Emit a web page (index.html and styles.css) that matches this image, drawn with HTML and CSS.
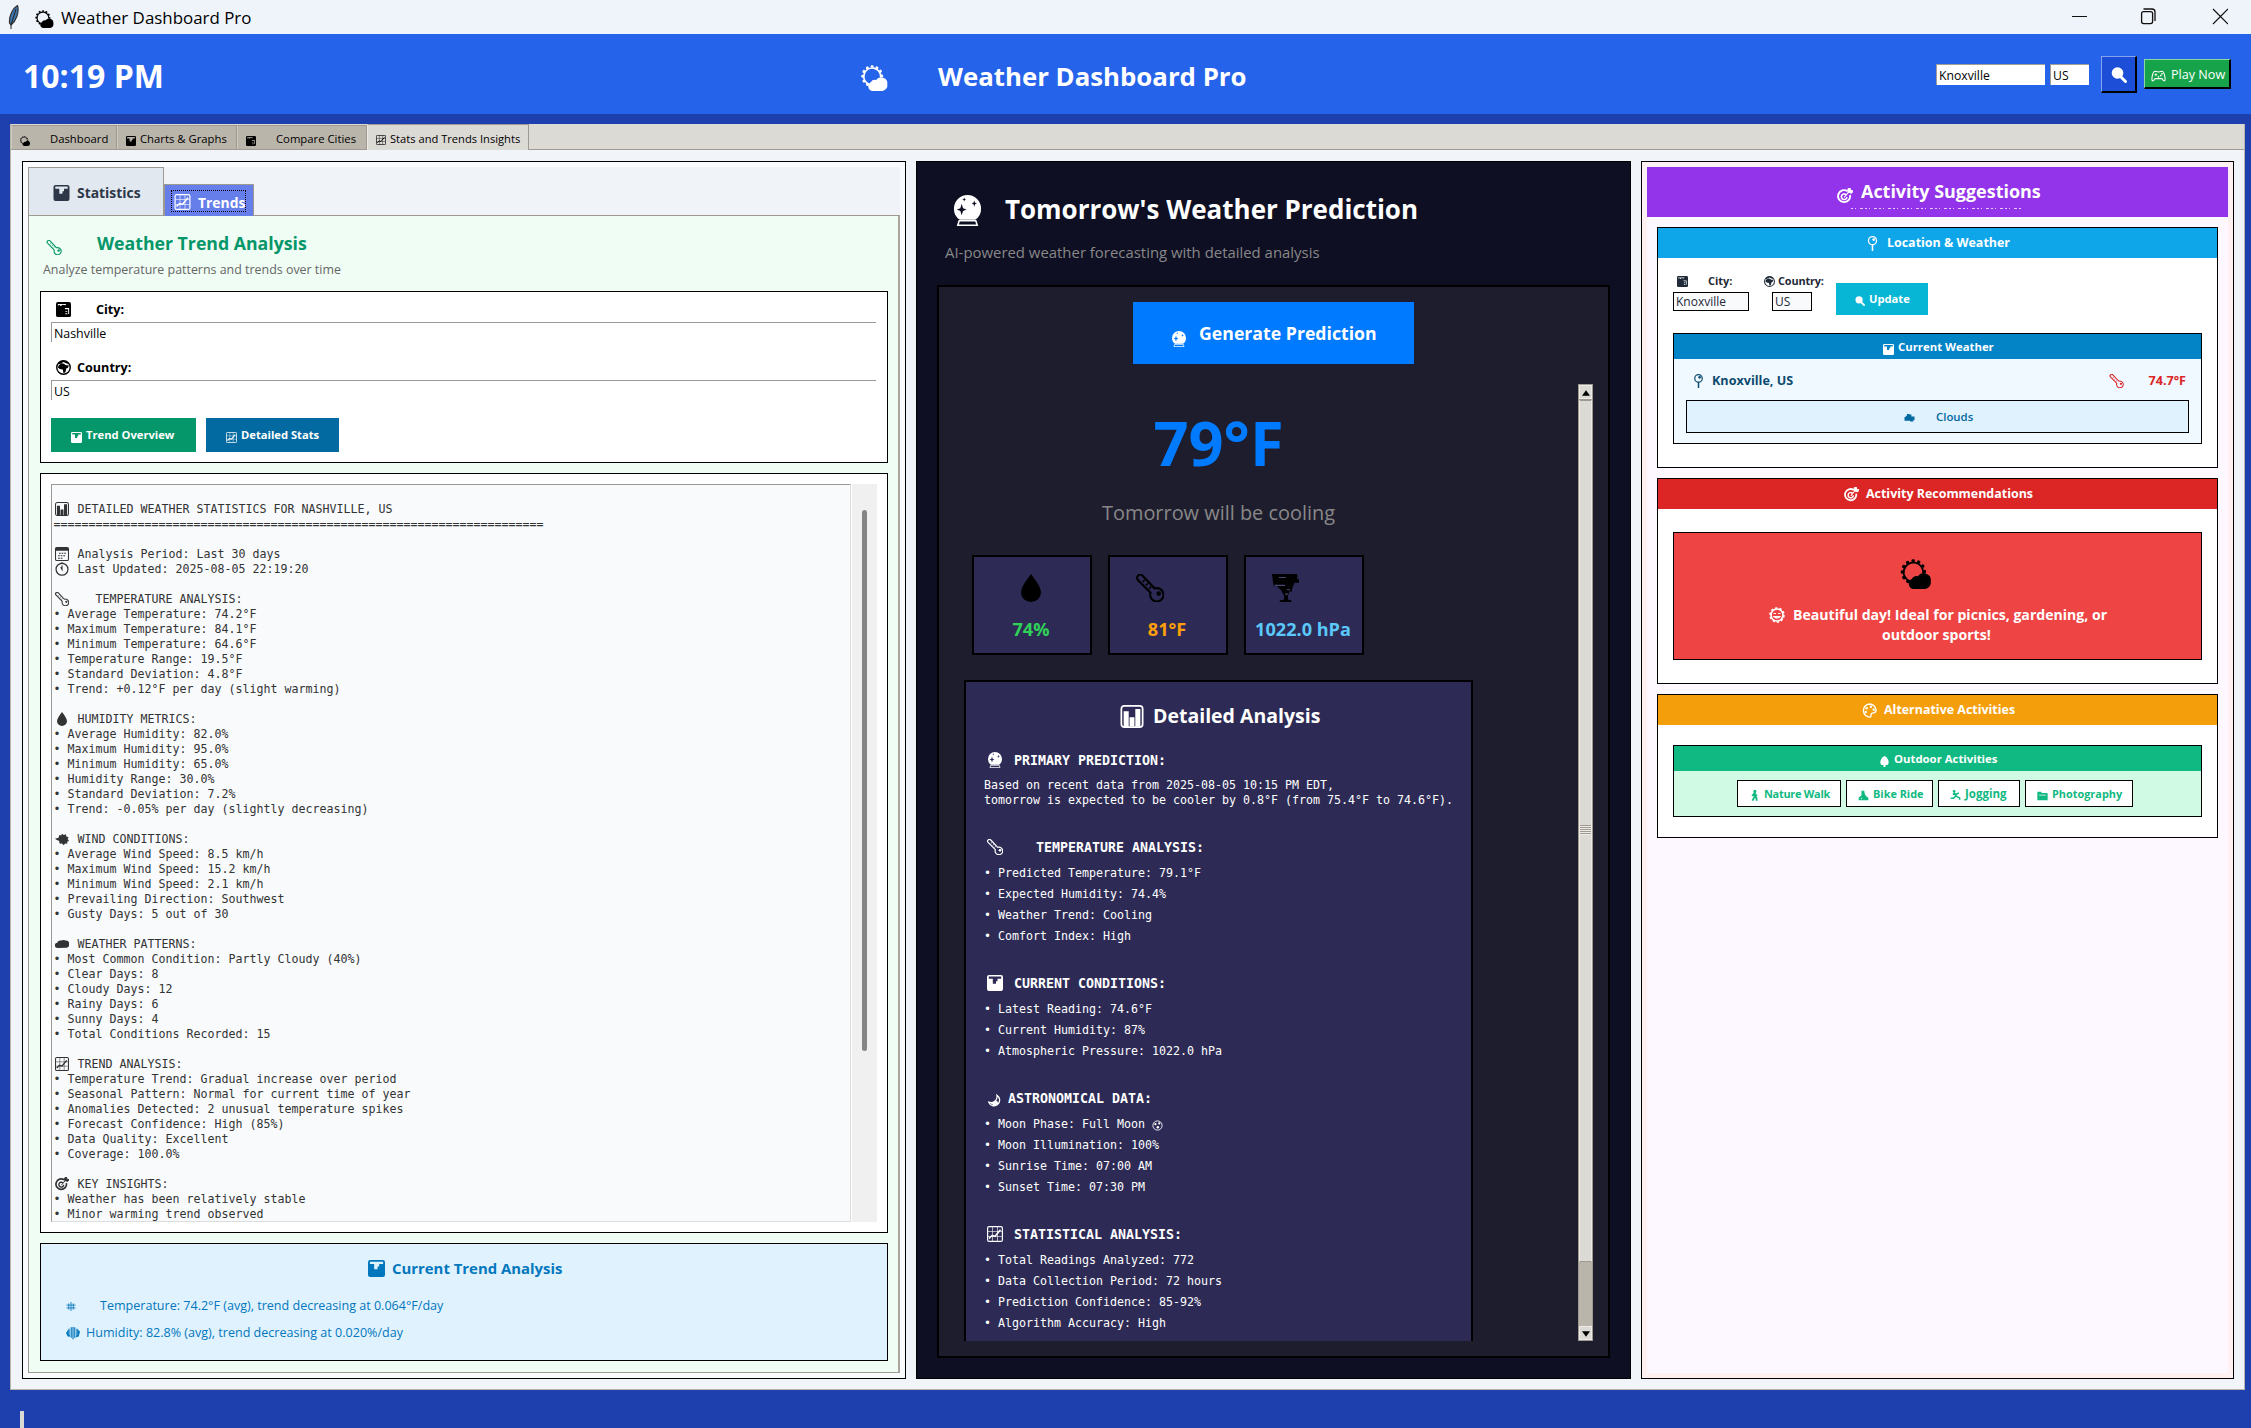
FILE: index.html
```html
<!DOCTYPE html>
<html lang="en">
<head>
<meta charset="utf-8">
<title>Weather Dashboard Pro</title>
<link rel="stylesheet" href="styles.css">
</head>
<body>
<svg class="defs" aria-hidden="true">
  <symbol id="suncloud" viewBox="0 0 16 16"><path d="M5 12A5.200 5.200 0 1 1 11.800 7.500" fill="none" stroke="currentColor" stroke-width="1"/><path d="M3.800 12.200A6 6 0 1 1 12.600 7" fill="none" stroke="currentColor" stroke-width="1.500" stroke-linecap="round" stroke-dasharray=".4 2.700"/><path d="M6.500 16a2.900 2.900 0 0 1-.8-5.400 3 3 0 0 1 3.300-1.400A3.800 3.800 0 0 1 15.900 11.800 3.700 3.700 0 0 1 13 16z" fill="currentColor"/></symbol>
  <symbol id="bars" viewBox="0 0 16 16"><path fill-rule="evenodd" fill="currentColor" d="M2 0h12a2 2 0 0 1 2 2v12a2 2 0 0 1-2 2H2a2 2 0 0 1-2-2V2a2 2 0 0 1 2-2zM1.800 1.600V3.800H5.800V8.800H9V6.200H10.500V3.800H14.200V1.600z"/></symbol>
  <symbol id="barbox" viewBox="0 0 16 16"><rect x=".6" y=".6" width="14.800" height="14.800" rx="2" fill="none" stroke="currentColor" stroke-width="1.200"/><path d="M2.200 4.300h3.500v11H2.200zM6.300 8.500h3.400v6.500H6.300zM10.300 2.700h3.500v12.500h-3.500z" fill="currentColor"/></symbol>
  <symbol id="city" viewBox="0 0 16 16"><path fill-rule="evenodd" fill="currentColor" d="M2 0h12a2 2 0 0 1 2 2v12a2 2 0 0 1-2 2H2a2 2 0 0 1-2-2V2a2 2 0 0 1 2-2zM2 2v2l2-1 1 1.500 2-1.500 3 .5 1-1.500zM9.500 6.500v1.200h3.500v5h1V6.500zM10 9.500h2v1h-2zM10 12h2v1h-2z"/></symbol>
  <symbol id="trend" viewBox="0 0 16 16"><rect x=".6" y=".6" width="14.800" height="14.800" rx="1.500" fill="none" stroke="currentColor" stroke-width="1.200"/><path d="M5.500 1v14M10.500 1v14M1 5.500h14M1 10.500h14" stroke="currentColor" stroke-width=".6"/><path d="M2 12.500 5 9.500l3 .8 5.500-6.500" fill="none" stroke="currentColor" stroke-width="1.500"/></symbol>
  <symbol id="thermo" viewBox="0 0 16 16"><path d="M1.100 3.400A1.800 1.800 0 0 1 3.800 1L10.700 8.300A3.800 3.800 0 1 1 8.300 10.700z" fill="none" stroke="currentColor" stroke-width="1.200" stroke-linejoin="round"/><path d="M3.800 4.500l1.300-1.200M5.600 6.500l1.300-1.200M7.400 8.500l1.300-1.200" stroke="currentColor" stroke-width=".8"/><circle cx="13" cy="11.200" r="1.300" fill="currentColor"/></symbol>
  <symbol id="globe" viewBox="0 0 16 16"><circle cx="8" cy="8" r="7.200" fill="none" stroke="currentColor" stroke-width="1.500"/><path d="M3 5.500 6 3.500l2.500.5 2 1.500 3 0L13 8l-2 1-1 4-2 1-.8-4L4 9.500 2 8z" fill="currentColor"/><path d="M2 3.500C5 0 11 0 14 3.500L12 4 8 2 4 4.500z" fill="currentColor"/></symbol>
  <symbol id="calendar" viewBox="0 0 16 16"><rect x=".6" y=".6" width="14.800" height="14.800" rx="1.500" fill="none" stroke="currentColor" stroke-width="1.200"/><path d="M.6 1h14.800v3.300H.6z" fill="currentColor"/><path d="M4.500 7.200h8M3.500 10h9M3.500 12.800h6" stroke="currentColor" stroke-width="1.300" stroke-dasharray="2 1"/></symbol>
  <symbol id="clock" viewBox="0 0 16 16"><circle cx="8" cy="8.300" r="6.800" fill="none" stroke="currentColor" stroke-width="1.400"/><path d="M8 4v4.500L6.500 6M6.500 0h3" stroke="currentColor" stroke-width="1.300" fill="none"/></symbol>
  <symbol id="drop" viewBox="0 0 16 16"><path d="M8 0C10.500 3.500 13.700 7.500 13.700 10.500a5.700 5.500 0 0 1-11.400 0C2.300 7.500 5.500 3.500 8 0z" fill="currentColor"/></symbol>
  <symbol id="wind" viewBox="0 0 16 16"><path d="M0 7.600 4 6.500 5 3.500 7 4 8 2l2 1.500 2.500-1L13 5l2.500 1-1 2 1.500 2-2 1 0 2.500-2.500-.5L10 15l-2-2-2.500.5L4.500 10 2 9z" fill="currentColor"/></symbol>
  <symbol id="cloud" viewBox="0 0 16 16"><path d="M3 12.500A3 3 0 0 1 2.500 6.500 4 4 0 0 1 7 4 6 6 0 0 1 12.500 4a4.200 4.200 0 0 1 1 8.200z" fill="currentColor"/></symbol>
  <symbol id="cloud2" viewBox="0 0 16 16"><path d="M0 14V8h2V6h2V3h4v1h3v3h5v6h-2v2H9v-1z" fill="currentColor"/></symbol>
  <symbol id="target" viewBox="0 0 16 16"><path d="M10.500 3.200A6 6 0 1 0 13 7" fill="none" stroke="currentColor" stroke-width="1.900"/><path d="M9 6.600A2.800 2.800 0 1 0 10 9" fill="none" stroke="currentColor" stroke-width="1.600"/><path d="M7.200 9.400l5-6M11 4V1l2-1 .5 2.300L16 3l-1.500 2z" fill="currentColor" stroke="currentColor" stroke-width="1.100"/></symbol>
  <symbol id="snow" viewBox="0 0 16 16"><path d="M8 0v16M0 5.500h16M0 10.500h16M4 2.500v11M12 2.500v11" stroke="currentColor" stroke-width="1.500"/></symbol>
  <symbol id="hum" viewBox="0 0 16 16"><path d="M3.500 3v9M12.500 3v9M8 1v14M6 1.500v12M10 1.500v12" stroke="currentColor" stroke-width="1.300"/><path d="M0 8 3 3.500v6L5 12H2zM16 6.500 13 3v7l-2.500 3 4-1z" fill="currentColor"/></symbol>
  <symbol id="ball" viewBox="0 0 16 16"><path fill-rule="evenodd" fill="currentColor" d="M4 12.800A7 6.800 0 0 1 1 7 7 7 0 0 1 15 7a7 6.800 0 0 1-3 5.800zM5 4.500 4.300 6.800 2.500 7.500l1.800.7L5 10.500l.7-2.300 1.800-.7-1.800-.7zM11.500 2.800l-.4 1.200-1 .4 1 .4.4 1.300.4-1.300 1-.4-1-.4zM6.300 1.300 6 2l-.7.300.7.300.3.700.3-.7.700-.3-.7-.3z"/><path d="M3.700 13.300h8.600l.7 2.300H3z" fill="none" stroke="currentColor" stroke-width=".8"/></symbol>
  <symbol id="tornado" viewBox="0 0 16 16"><path d="M.5 0h14.500v3H16V5h-2.500L12 8.500V10h-1.500L9.700 12.500v2l2 .7V16H5v-.8l2.500-.7v-2L6 9.500 3.500 7H1.500z" fill="currentColor"/><path d="M4.500 2h4M2 6.500h6M9 9h2M8 11.500h1.800" stroke="#4b4875" stroke-width=".6"/></symbol>
  <symbol id="moon" viewBox="0 0 16 16"><path d="M11 1.500A7 7 0 1 1 .8 10 7.500 7.500 0 0 0 11 1.500z" fill="none" stroke="currentColor" stroke-width="1.600"/><path d="M3 11.500l8-3.500 2 4-5 2.500z" fill="currentColor"/></symbol>
  <symbol id="fullmoon" viewBox="0 0 16 16"><circle cx="8" cy="8" r="6.700" fill="none" stroke="currentColor" stroke-width="1.300"/><circle cx="5" cy="6" r="1.600" fill="currentColor"/><circle cx="10.500" cy="5" r="1.600" fill="currentColor"/><circle cx="8.500" cy="10.500" r="1.800" fill="currentColor"/></symbol>
  <symbol id="pin" viewBox="0 0 16 16"><circle cx="8" cy="5" r="4.300" fill="none" stroke="currentColor" stroke-width="1.400"/><path d="M8 9v7" stroke="currentColor" stroke-width="1.700"/><circle cx="9.300" cy="3.800" r="1.500" fill="currentColor"/></symbol>
  <symbol id="search" viewBox="0 0 16 16"><circle cx="6.500" cy="6" r="5.800" fill="currentColor"/><path d="M9.500 9.500 14.500 14.500" stroke="currentColor" stroke-width="3" stroke-linecap="round"/></symbol>
  <symbol id="pad" viewBox="0 0 16 16"><path d="M4 2.500 8 3.500l4-1c2 0 3.500 5 3.500 9.500 0 2.500-2 2-3.500-1H4c-1.500 3-3.500 3.500-3.500 1C.5 7.500 2 2.500 4 2.500z" fill="none" stroke="currentColor" stroke-width="1.200"/><path d="M3.500 6.500h3M5 5v3" stroke="currentColor"/><circle cx="10.500" cy="7.500" r="1" fill="currentColor"/><circle cx="12" cy="5.500" r="1" fill="currentColor"/><circle cx="8" cy="9" r=".9" fill="currentColor"/></symbol>
  <symbol id="palette" viewBox="0 0 16 16"><path d="M8 1a7 7 0 1 0 1 14c1.500-.5-.5-3 1.500-4s4.500.5 4.500-3.500A7 7 0 0 0 8 1z" fill="none" stroke="currentColor" stroke-width="1.500"/><circle cx="5" cy="5.500" r="1.300" fill="currentColor"/><circle cx="4" cy="9.500" r="1.300" fill="currentColor"/><circle cx="9.500" cy="4" r="1.300" fill="currentColor"/><circle cx="12.500" cy="7" r="1.300" fill="currentColor"/></symbol>
  <symbol id="sunface" viewBox="0 0 16 16"><circle cx="8" cy="8" r="6" fill="none" stroke="currentColor" stroke-width="1.600"/><circle cx="8" cy="8" r="7" fill="none" stroke="currentColor" stroke-width="1.600" stroke-dasharray="2.400 2"/><path d="M4.500 6.500h2.500M9 6.500h2.500M5 9.500q3 3 6 0z" stroke="currentColor" stroke-width="1.200" fill="none"/></symbol>
  <symbol id="tree" viewBox="0 0 16 16"><path d="M8 0q4 1.500 5.500 6t-1 7H9.500v3h-3v-3H3.500q-2.500-2.500-1-7T8 0z" fill="currentColor"/></symbol>
  <symbol id="walk" viewBox="0 0 16 16"><circle cx="8.500" cy="2" r="2.200" fill="currentColor"/><path d="M8 5v5L5 15.500M8 9l3 3v3.500M4.500 8.500 8 5l3.500 4" stroke="currentColor" stroke-width="2.700" fill="none"/></symbol>
  <symbol id="bike" viewBox="0 0 16 16"><path d="M5 1h4l1 5 3 4 2 1v4H1v-4l4-3z" fill="currentColor"/><circle cx="5" cy="12.500" r="1" fill="#fff"/></symbol>
  <symbol id="run" viewBox="0 0 16 16"><circle cx="6" cy="2" r="2" fill="currentColor"/><path d="M6 4l3 5 5 2.500V14M8 9l-3 3H1M4 6l5 0 4-1.500" stroke="currentColor" stroke-width="2.300" fill="none"/></symbol>
  <symbol id="camera" viewBox="0 0 16 16"><path d="M1 2.500h5l1 2h7.500a1 1 0 0 1 1 1V15h-15V3.500z" fill="currentColor"/><path d="M3 7.500h10" stroke="#fff"/></symbol>
</svg>

<header class="titlebar">
  <svg class="feather" viewBox="0 0 12 24"><path d="M9.500.5C5 3 1 10 1.500 18l1.500 2C8 16 11.500 8 9.500.5z" fill="#3f75ad" stroke="#333" stroke-width="1.200"/><path d="M8 4 3 20v4" fill="none" stroke="#222" stroke-width="1"/></svg>
  <svg class="i i19"><use href="#suncloud"/></svg>
  <span class="wintitle">Weather Dashboard Pro</span>
  <svg class="winctl" viewBox="0 0 156 20"><path d="M0 10.500h15M141 3l15 15M156 3l-15 15" stroke="#111" stroke-width="1.200" fill="none"/><rect x="69.600" y="5.600" width="11" height="12" rx="2" fill="none" stroke="#111" stroke-width="1.300"/><path d="M71.500 3h8.500a3 3 0 0 1 3 3v9" fill="none" stroke="#111" stroke-width="1.300"/></svg>
</header>

<section class="appbar">
  <div class="clock">10:19 PM</div>
  <div class="apptitle"><svg class="i"><use href="#suncloud"/></svg><span>Weather Dashboard Pro</span></div>
  <div class="appform">
    <div class="entry e-city">Knoxville</div>
    <div class="entry e-ctry">US</div>
    <div class="btn-search"><svg class="i"><use href="#search"/></svg></div>
    <div class="btn-play"><svg class="i"><use href="#pad"/></svg><span>Play Now</span></div>
  </div>
</section>

<main class="book">
  <nav class="tabs">
    <div class="tab t1"><svg class="i"><use href="#suncloud"/></svg><span>Dashboard</span></div>
    <div class="tab t2"><svg class="i"><use href="#bars"/></svg><span>Charts &amp; Graphs</span></div>
    <div class="tab t3"><svg class="i"><use href="#city"/></svg><span>Compare Cities</span></div>
    <div class="tab t4 active"><svg class="i"><use href="#trend"/></svg><span>Stats and Trends Insights</span></div>
  </nav>
  <div class="columns">

    <section class="left">
      <div class="subtabs">
        <div class="st stats"><svg class="i"><use href="#bars"/></svg><span>Statistics</span></div>
        <div class="st trends"><div class="focus"><svg class="i"><use href="#trend"/></svg><span>Trends</span></div></div>
      </div>
      <div class="green">
        <h2 class="lefttitle"><svg class="i"><use href="#thermo"/></svg><span>Weather Trend Analysis</span></h2>
        <p class="leftsub">Analyze temperature patterns and trends over time</p>
        <div class="form">
          <div class="flabel wide"><svg class="i"><use href="#city"/></svg><span>City:</span></div>
          <div class="fentry">Nashville</div>
          <div class="flabel second"><svg class="i"><use href="#globe"/></svg><span>Country:</span></div>
          <div class="fentry">US</div>
          <div class="fbtns">
            <div class="fbtn b1"><svg class="i"><use href="#bars"/></svg><span>Trend Overview</span></div>
            <div class="fbtn b2"><svg class="i"><use href="#trend"/></svg><span>Detailed Stats</span></div>
          </div>
        </div>
        <div class="results">
          <div class="report">
            <div class="ln"></div>
            <div class="ln h"><svg class="i"><use href="#barbox"/></svg>DETAILED WEATHER STATISTICS FOR NASHVILLE, US</div>
            <div class="ln">======================================================================</div>
            <div class="ln"></div>
            <div class="ln h"><svg class="i"><use href="#calendar"/></svg>Analysis Period: Last 30 days</div>
            <div class="ln h"><svg class="i"><use href="#clock"/></svg>Last Updated: 2025-08-05 22:19:20</div>
            <div class="ln"></div>
            <div class="ln h far"><svg class="i"><use href="#thermo"/></svg>TEMPERATURE ANALYSIS:</div>
            <div class="ln">• Average Temperature: 74.2°F</div>
            <div class="ln">• Maximum Temperature: 84.1°F</div>
            <div class="ln">• Minimum Temperature: 64.6°F</div>
            <div class="ln">• Temperature Range: 19.5°F</div>
            <div class="ln">• Standard Deviation: 4.8°F</div>
            <div class="ln">• Trend: +0.12°F per day (slight warming)</div>
            <div class="ln"></div>
            <div class="ln h"><svg class="i"><use href="#drop"/></svg>HUMIDITY METRICS:</div>
            <div class="ln">• Average Humidity: 82.0%</div>
            <div class="ln">• Maximum Humidity: 95.0%</div>
            <div class="ln">• Minimum Humidity: 65.0%</div>
            <div class="ln">• Humidity Range: 30.0%</div>
            <div class="ln">• Standard Deviation: 7.2%</div>
            <div class="ln">• Trend: -0.05% per day (slightly decreasing)</div>
            <div class="ln"></div>
            <div class="ln h"><svg class="i"><use href="#wind"/></svg>WIND CONDITIONS:</div>
            <div class="ln">• Average Wind Speed: 8.5 km/h</div>
            <div class="ln">• Maximum Wind Speed: 15.2 km/h</div>
            <div class="ln">• Minimum Wind Speed: 2.1 km/h</div>
            <div class="ln">• Prevailing Direction: Southwest</div>
            <div class="ln">• Gusty Days: 5 out of 30</div>
            <div class="ln"></div>
            <div class="ln h"><svg class="i"><use href="#cloud"/></svg>WEATHER PATTERNS:</div>
            <div class="ln">• Most Common Condition: Partly Cloudy (40%)</div>
            <div class="ln">• Clear Days: 8</div>
            <div class="ln">• Cloudy Days: 12</div>
            <div class="ln">• Rainy Days: 6</div>
            <div class="ln">• Sunny Days: 4</div>
            <div class="ln">• Total Conditions Recorded: 15</div>
            <div class="ln"></div>
            <div class="ln h"><svg class="i"><use href="#trend"/></svg>TREND ANALYSIS:</div>
            <div class="ln">• Temperature Trend: Gradual increase over period</div>
            <div class="ln">• Seasonal Pattern: Normal for current time of year</div>
            <div class="ln">• Anomalies Detected: 2 unusual temperature spikes</div>
            <div class="ln">• Forecast Confidence: High (85%)</div>
            <div class="ln">• Data Quality: Excellent</div>
            <div class="ln">• Coverage: 100.0%</div>
            <div class="ln"></div>
            <div class="ln h"><svg class="i"><use href="#target"/></svg>KEY INSIGHTS:</div>
            <div class="ln">• Weather has been relatively stable</div>
            <div class="ln">• Minor warming trend observed</div>
          </div>
          <div class="lscroll"><div class="lthumb"></div></div>
        </div>
        <div class="current">
          <h3><svg class="i"><use href="#bars"/></svg><span>Current Trend Analysis</span></h3>
          <p class="c1"><svg class="i"><use href="#snow"/></svg><span>Temperature: 74.2°F (avg), trend decreasing at 0.064°F/day</span></p>
          <p class="c2"><svg class="i"><use href="#hum"/></svg><span>Humidity: 82.8% (avg), trend decreasing at 0.020%/day</span></p>
        </div>
      </div>
    </section>

    <section class="mid">
      <h1><svg class="i"><use href="#ball"/></svg><span>Tomorrow's Weather Prediction</span></h1>
      <p class="midsub">AI-powered weather forecasting with detailed analysis</p>
      <div class="predict">
        <div class="gen"><svg class="i"><use href="#ball"/></svg><span>Generate Prediction</span></div>
        <div class="canvas">
          <div class="content">
            <div class="temp">79°F</div>
            <div class="outlook">Tomorrow will be cooling</div>
            <div class="metrics">
              <div class="metric m1"><svg class="i"><use href="#drop"/></svg><span>74%</span></div>
              <div class="metric m2"><svg class="i"><use href="#thermo"/></svg><span>81°F</span></div>
              <div class="metric m3"><svg class="i"><use href="#tornado"/></svg><span>1022.0 hPa</span></div>
            </div>
            <div class="detail">
              <h3><svg class="i"><use href="#barbox"/></svg><span>Detailed Analysis</span></h3>
              <h4><svg class="i"><use href="#ball"/></svg>PRIMARY PREDICTION:</h4>
              <p class="para">Based on recent data from 2025-08-05 10:15 PM EDT,<br>tomorrow is expected to be cooler by 0.8°F (from 75.4°F to 74.6°F).</p>
              <h4 class="far"><svg class="i"><use href="#thermo"/></svg>TEMPERATURE ANALYSIS:</h4>
              <p>• Predicted Temperature: 79.1°F</p>
              <p>• Expected Humidity: 74.4%</p>
              <p>• Weather Trend: Cooling</p>
              <p>• Comfort Index: High</p>
              <h4><svg class="i"><use href="#bars"/></svg>CURRENT CONDITIONS:</h4>
              <p>• Latest Reading: 74.6°F</p>
              <p>• Current Humidity: 87%</p>
              <p>• Atmospheric Pressure: 1022.0 hPa</p>
              <h4 class="near"><svg class="i"><use href="#moon"/></svg>ASTRONOMICAL DATA:</h4>
              <p>• Moon Phase: Full Moon <svg class="i fm"><use href="#fullmoon"/></svg></p>
              <p>• Moon Illumination: 100%</p>
              <p>• Sunrise Time: 07:00 AM</p>
              <p>• Sunset Time: 07:30 PM</p>
              <h4><svg class="i"><use href="#trend"/></svg>STATISTICAL ANALYSIS:</h4>
              <p>• Total Readings Analyzed: 772</p>
              <p>• Data Collection Period: 72 hours</p>
              <p>• Prediction Confidence: 85-92%</p>
              <p>• Algorithm Accuracy: High</p>
            </div>
          </div>
          <div class="mscroll">
            <div class="arrow"><svg viewBox="0 0 9 6"><path d="M4.500 0 9 6H0z"/></svg></div>
            <div class="mthumb"><div class="grip"></div></div>
            <div class="arrow"><svg viewBox="0 0 9 6"><path d="M4.500 6 9 0H0z"/></svg></div>
          </div>
        </div>
      </div>
    </section>

    <section class="right">
      <div class="rinner">
        <div class="rtitle"><svg class="i"><use href="#target"/></svg><span>Activity Suggestions</span><div class="clip"></div></div>
        <div class="card k1">
          <div class="chead"><svg class="i"><use href="#pin"/></svg><span>Location &amp; Weather</span></div>
          <div class="loc">
            <div class="field f1"><label><svg class="i"><use href="#city"/></svg><span>City:</span></label><div class="box">Knoxville</div></div>
            <div class="field f2"><label><svg class="i"><use href="#globe"/></svg><span>Country:</span></label><div class="box">US</div></div>
            <div class="update"><svg class="i"><use href="#search"/></svg><span>Update</span></div>
          </div>
          <div class="now">
            <div class="shead"><svg class="i"><use href="#bars"/></svg><span>Current Weather</span></div>
            <div class="nowrow"><svg class="i pin"><use href="#pin"/></svg><span class="place">Knoxville, US</span><svg class="i th"><use href="#thermo"/></svg><span class="deg">74.7°F</span></div>
            <div class="clouds"><svg class="i"><use href="#cloud2"/></svg><span>Clouds</span></div>
          </div>
        </div>
        <div class="card k2">
          <div class="chead"><svg class="i"><use href="#target"/></svg><span>Activity Recommendations</span></div>
          <div class="rec">
            <svg class="i big"><use href="#suncloud"/></svg>
            <div class="r1"><svg class="i"><use href="#sunface"/></svg><span>Beautiful day! Ideal for picnics, gardening, or</span></div>
            <div class="r2">outdoor sports!</div>
          </div>
        </div>
        <div class="card k3">
          <div class="chead"><svg class="i"><use href="#palette"/></svg><span>Alternative Activities</span></div>
          <div class="outdoor">
            <div class="shead"><svg class="i"><use href="#tree"/></svg><span>Outdoor Activities</span></div>
            <div class="acts">
              <div class="act a1"><svg class="i"><use href="#walk"/></svg><span>Nature Walk</span></div>
              <div class="act a2"><svg class="i"><use href="#bike"/></svg><span>Bike Ride</span></div>
              <div class="act a3"><svg class="i"><use href="#run"/></svg><span>Jogging</span></div>
              <div class="act a4"><svg class="i"><use href="#camera"/></svg><span>Photography</span></div>
            </div>
          </div>
        </div>
      </div>
    </section>
  </div>
</main>
<div class="footmark"></div>
</body>
</html>
```
FILE: styles.css
```css
* { box-sizing: border-box; margin: 0; padding: 0; }
body { width: 2251px; height: 1428px; overflow: hidden; background: #1e40af; font-family: "Open Sans", "Noto Sans", sans-serif; font-size: 11.400px; color: #000; white-space: nowrap; }
.defs { display: none; }
.i { display: block; flex: none; overflow: visible; }
span { display: block; }
h1, h2, h3, h4 { font-weight: 700; }

.titlebar { height: 34px; background: #eff4fb; display: flex; align-items: center; padding-left: 8px; }
.feather { width: 12px; height: 24px; margin-top: -1px; }
.i19 { width: 19px; height: 18px; margin: 3px 7px 0 15px; }
.wintitle { font-size: 16.900px; line-height: 34px; margin-top: 1px; }
.winctl { width: 156px; height: 20px; margin: -2px 23px 0 auto; }

.appbar { height: 80px; background: #2563eb; color: #fff; display: flex; padding-left: 23px; }
.clock { font-size: 32px; font-weight: 700; line-height: 84px; width: 837px; }
.apptitle { display: flex; font-size: 25.800px; font-weight: 700; line-height: 84px; }
.apptitle .i { width: 29px; height: 26px; margin: 31px 49px 0 0; }
.appform { display: flex; margin-left: auto; padding-right: 20px; color: #000; }
.entry { height: 21px; margin-top: 30px; background: #fff; border-top: 1px solid #a39e94; border-left: 1px solid #a39e94; font-size: 12.200px; line-height: 22px; padding-left: 2px; }
.e-city { width: 109px; margin-right: 5px; }
.e-ctry { width: 39px; margin-right: 12px; }
.btn-search { width: 36px; height: 37px; margin: 22px 7px 0 0; background: #1d4ed8; border: 1px solid #86a4ee; border-right: 2px solid #000; border-bottom: 2px solid #000; color: #fff; }
.btn-search .i { width: 16px; height: 16px; margin: 10px 0 0 9px; }
.btn-play { width: 87px; height: 30px; margin-top: 25px; background: #16a34a; border: 1px solid #8ad9a5; border-right: 2px solid #000; border-bottom: 2px solid #000; color: #fff; display: flex; font-size: 12.600px; line-height: 29px; padding-left: 6px; }
.btn-play .i { width: 15px; height: 14px; margin: 9px 5px 0 0; }

.book { margin: 10px 6px 0 10px; height: 1266px; background: #f1f5f9; border: 1px solid #bab5ab; border-top: 0; }
.tabs { height: 26px; background: #dcdad5; border-bottom: 1px solid #9e9a91; display: flex; align-items: flex-end; }
.tab { height: 24px; background: #bab5ab; border: 1px solid #9e9a91; border-left-color: #cfcac0; border-bottom: 0; display: flex; line-height: 25px; font-size: 11.300px; }
.tab .i { width: 10px; height: 10px; margin: 10px 0 0 8px; }
.tab span { margin-left: 4px; }
.t1 { width: 106px; } .t1 span { margin-left: 20px; }
.t2 { width: 120px; }
.t3 { width: 130px; } .t3 span { margin-left: 20px; }
.t4 { width: 162px; }
.tab.active { background: #dcdad5; height: 26px; margin-bottom: -1px; border-left-color: #eeebe7; line-height: 28px; font-size: 11.150px; }
.columns { display: flex; gap: 10px; padding: 11px 10px 0 11px; }

.left { width: 884px; height: 1218px; border: 1px solid #000; background: #f9fbfe; padding: 5px; }
.subtabs { height: 49px; background: #f0f4f8; display: flex; border-bottom: 1px solid #9e9a91; align-items: flex-end; }
.st { font-size: 13.900px; font-weight: 700; display: flex; border: 1px solid #9e9a91; border-bottom: 0; }
.stats { width: 136px; height: 48px; background: #e2e8f0; color: #2d3748; line-height: 50px; }
.stats .i { width: 17px; height: 16px; margin: 17px 7px 0 24px; }
.trends { width: 90px; height: 32px; margin-bottom: -1px; background: #667eea; color: #fff; padding: 5px 0 0 6px; }
.focus { width: 75px; height: 22px; border: 1px dotted #000; display: flex; line-height: 23px; }
.focus .i { width: 17px; height: 16px; margin: 3px 7px 0 2px; }
.green { width: 872px; height: 1157px; background: #f0fdf4; border: 1px solid #9e9a91; border-top: 0; border-right: 2px solid #aaa69d; padding: 0 0 0 11px; }
.lefttitle { display: flex; font-size: 17.700px; line-height: 26px; color: #059669; padding-top: 14px; height: 40px; }
.lefttitle .i { width: 16px; height: 15px; margin: 10px 35px 0 6px; }
.leftsub { font-size: 12.430px; color: #666; line-height: 20px; margin-left: 3px; height: 35px; padding-top: 4px; }
.form { width: 848px; height: 172px; border: 1px solid #000; background: #fff; padding: 10px 11px 0 10px; }
.flabel { display: flex; height: 20px; font-size: 12.600px; font-weight: 700; line-height: 16px; padding: 0 0 0 5px; }
.flabel .i { width: 15px; height: 15px; margin-right: 6px; }
.flabel.wide .i { margin-right: 25px; }
.flabel.second { margin-top: 18px; }
.fentry { height: 20px; border-top: 1px solid #999; border-left: 1px solid #999; font-size: 12.400px; line-height: 21px; padding-left: 2px; }
.fbtns { display: flex; gap: 10px; margin-top: 18px; }
.fbtn { height: 34px; display: flex; color: #fff; font-size: 11.200px; font-weight: 700; line-height: 34px; }
.fbtn .i { width: 11px; height: 11px; margin: 14px 4px 0 20px; }
.b1 { width: 145px; background: #059669; } .b2 { width: 133px; background: #0369a1; }
.results { width: 848px; height: 760px; margin-top: 10px; border: 1px solid #000; background: #fff; padding: 10px 10px 0 10px; display: flex; justify-content: space-between; }
.report { width: 800px; height: 738px; background: #f8fafc; border: 1px solid #999; border-right-color: #ddd; border-bottom-color: #ddd; overflow: hidden; padding: 2px 0 0 1.600px; font-family: "DejaVu Sans Mono", monospace; font-size: 11.630px; color: #333; }
.ln { height: 15px; line-height: 15px; white-space: pre; }
.ln.h { display: flex; }
.ln .i { width: 14px; height: 14px; margin: 0 9px 0 1px; }
.ln.far .i { margin-right: 27px; }
.lscroll { width: 25px; height: 738px; background: #f0f0f0; }
.lthumb { width: 5px; height: 541px; margin: 26px 0 0 10px; border-radius: 3px; background: #858585; }
.current { width: 848px; height: 118px; margin-top: 10px; border: 1px solid #000; background: #e0f2fe; color: #0277bd; padding-top: 12px; }
.current h3 { display: flex; font-size: 14.900px; line-height: 24px; padding-left: 326px; }
.current h3 .i { width: 19px; height: 17px; margin: 4px 6px 0 0; }
.current p { display: flex; font-size: 12.550px; line-height: 20px; padding-left: 25px; }
.c1 { margin-top: 16px; } .c1 .i { width: 10px; height: 9px; margin: 6px 24px 0 0; }
.c2 { margin-top: 7px; } .c2 .i { width: 14px; height: 14px; margin: 3px 6px 0 0; }

.mid { width: 715px; height: 1218px; border: 1px solid #000; background: #0f0f23; color: #fff; padding-left: 20px; }
.mid h1 { display: flex; font-size: 25.980px; line-height: 40px; padding: 27px 0 0 15px; height: 75px; }
.mid h1 .i { width: 31px; height: 31px; margin: 6px 22px 0 0; }
.midsub { font-size: 14.920px; color: #888; line-height: 24px; padding-left: 8px; height: 48px; padding-top: 3px; }
.predict { width: 673px; height: 1073px; border: 2px solid #000; background: #1e1d2d; }
.gen { width: 281px; height: 62px; margin: 15px 0 20px 194px; background: #007aff; display: flex; font-size: 17.700px; font-weight: 700; line-height: 63px; }
.gen .i { width: 16px; height: 16px; margin: 29px 12px 0 38px; }
.canvas { height: 957px; display: flex; overflow: hidden; padding-left: 25px; }
.content { width: 509px; }
.temp { height: 117px; text-align: center; font-size: 61.400px; font-weight: 700; color: #007aff; line-height: 117px; }
.outlook { text-align: center; font-size: 19.920px; color: #888; line-height: 24px; }
.metrics { display: flex; gap: 16px; margin: 30px 0 25px 8px; }
.metric { width: 120px; height: 100px; border: 2px solid #000; background: #2d2b55; font-size: 18.100px; font-weight: 700; line-height: 24px; text-align: center; }
.metric span { margin-left: -2px; }
.metric .i { width: 28px; height: 28px; margin: 17px auto 15px 43px; color: #000; }
.metric.m2 .i { margin-left: 26px; } .metric.m3 .i { margin-left: 25px; }
.m1 { color: #30d158; } .m2 { color: #ff9f0a; } .m3 { color: #5ac8fa; }
.detail { width: 509px; height: 700px; border: 2px solid #000; background: #2d2b55; padding-left: 18px; font-family: "DejaVu Sans Mono", monospace; font-size: 11.630px; }
.detail h3 { display: flex; font-family: "Open Sans", sans-serif; font-size: 19.500px; line-height: 28px; padding: 20px 0 0 136px; height: 60px; }
.detail h3 .i { width: 24px; height: 23px; margin: 3px 9px 0 0; }
.detail h4 { display: flex; font-size: 13.290px; line-height: 20px; height: 20px; margin: 27px 0 5px 3px; }
.detail h3 + h4 { margin-top: 9px; margin-bottom: 7px; }
.detail h4 .i { width: 16px; height: 16px; margin: 1px 11px 0 0; }
.detail h4.far .i { margin-right: 33px; }
.detail h4.near .i { margin: 5px 7px 0 1px; width: 13px; height: 13px; }
.detail p { height: 21px; line-height: 21px; display: flex; white-space: pre; }
.detail .para { display: block; height: 30px; line-height: 15px; margin-bottom: 30px; }
.detail .para + h4 { margin-top: 0; }
.fm { width: 11px; height: 11px; margin-top: 6px; }
.mscroll { width: 15px; height: 957px; margin-left: 105px; background: #bab5ab; border: 1px solid #9e9a91; display: flex; flex-direction: column; }
.arrow { height: 14px; background: #dcdad5; padding: 4px 0 0 2px; border: 1px solid #eeebe7; }
.arrow svg { display: block; width: 8px; height: 6px; }
.mthumb { height: 863px; margin-bottom: auto; background: #dcdad5; border: 1px solid #eeebe7; border-top: 2px solid #9e9a91; border-bottom-color: #9e9a91; padding-top: 424px; }
.grip { height: 10px; background: repeating-linear-gradient(#9e9a91 0 1px, #eeebe7 1px 2px); }

.right { width: 593px; height: 1218px; border: 1px solid #000; background: #fff1f2; padding: 5px; }
.rinner { height: 1206px; background: #fdf7ff; }
.rtitle { position: relative; height: 50px; background: #9333ea; color: #fff; display: flex; font-size: 17.950px; font-weight: 700; line-height: 49px; padding-left: 190px; }
.rtitle .i { width: 16px; height: 16px; margin: 21px 8px 0 0; }
.clip { position: absolute; left: 204px; top: 41px; width: 170px; height: 1px; background: repeating-linear-gradient(90deg, #e4ccfa 0 2px, transparent 2px 4px, #e4ccfa 4px 5px, transparent 5px 9px, #e4ccfa 9px 12px, transparent 12px 14px); }
.card { margin: 10px; border: 1px solid #000; background: #fff; }
.k1 { height: 241px; } .k2 { height: 206px; } .k3 { height: 144px; }
.chead { height: 30px; color: #fff; display: flex; font-size: 12.450px; font-weight: 700; line-height: 30px; }
.k1 .chead { background: #0ea5e9; padding-left: 207px; } .k2 .chead { background: #dc2626; padding-left: 186px; } .k3 .chead { background: #f59e0b; padding-left: 204px; }
.chead .i { width: 15px; height: 15px; margin: 8px 7px 0 0; }
.loc { display: flex; height: 75px; padding: 14px 0 0 15px; font-weight: 700; color: #1f2937; }
.field label { display: flex; line-height: 18px; height: 20px; font-size: 10.900px; }
.f1 label .i { width: 11px; height: 11px; margin: 4px 20px 0 4px; }
.f2 { margin-left: 15px; width: 50px; } .f2 label .i { width: 11px; height: 11px; margin: 4px 3px 0 0; }
.f2 label { letter-spacing: -.15px; }
.box { height: 19px; border: 1px solid #000; background: #f8fafc; font-weight: 400; font-size: 12px; line-height: 17px; padding-left: 2px; }
.f1 .box { width: 76px; } .f2 .box { width: 40px; margin-left: 8px; }
.update { width: 92px; height: 32px; margin: 11px 0 0 22px; background: #06b6d4; color: #fff; display: flex; font-size: 11.200px; line-height: 32px; }
.update .i { width: 10px; height: 10px; margin: 13px 4px 0 19px; }
.now, .outdoor { margin: 0 15px; border: 1px solid #000; }
.now { height: 111px; background: #f0f9ff; }
.shead { height: 25px; color: #fff; display: flex; font-size: 11.350px; font-weight: 700; line-height: 25px; }
.now .shead { background: #0284c7; padding-left: 209px; }
.shead .i { width: 11px; height: 11px; margin: 10px 4px 0 0; }
.nowrow { display: flex; height: 41px; font-weight: 700; font-size: 12.600px; line-height: 43px; color: #0c4a6e; }
.nowrow .pin { width: 15px; height: 14px; margin: 15px 6px 0 17px; }
.nowrow .th { width: 15px; height: 14px; margin: 15px 25px 0 auto; color: #dc2626; }
.nowrow .deg { color: #dc2626; margin-right: 15px; }
.clouds { height: 33px; margin: 0 12px; border: 1px solid #000; background: #e0f2fe; color: #0369a1; display: flex; font-size: 11.400px; font-weight: 600; line-height: 32px; }
.clouds .i { width: 11px; height: 10px; margin: 11px 21px 0 217px; }
.rec { margin: 23px 15px 0; height: 128px; border: 1px solid #000; background: #ef4444; color: #fff; font-size: 14.100px; font-weight: 700; line-height: 20px; }
.rec .big { width: 34px; height: 30px; margin: 26px 0 16px 225px; color: #000; }
.r1 { display: flex; padding-left: 95px; }
.r1 .i { width: 16px; height: 16px; margin: 2px 8px 0 0; }
.r2 { padding-left: 208px; }
.outdoor { margin-top: 20px; height: 72px; background: #d1fae5; }
.outdoor .shead { background: #10b981; padding-left: 205px; }
.acts { display: flex; gap: 5px; padding: 9px 0 0 63px; }
.act { height: 27px; border: 1px solid #000; background: #fff; color: #10b981; display: flex; font-size: 10.900px; font-weight: 700; line-height: 26px; }
.act .i { width: 11px; height: 11px; margin: 9px 4px 0 11px; }
.a1 { width: 104px; letter-spacing: -.25px; } .a2 { width: 87px; } .a3 { width: 82px; font-size: 11.500px; } .a4 { width: 108px; }

.footmark { width: 4px; height: 17px; margin: 21px 0 0 20px; background: #dcdad5; }
```
